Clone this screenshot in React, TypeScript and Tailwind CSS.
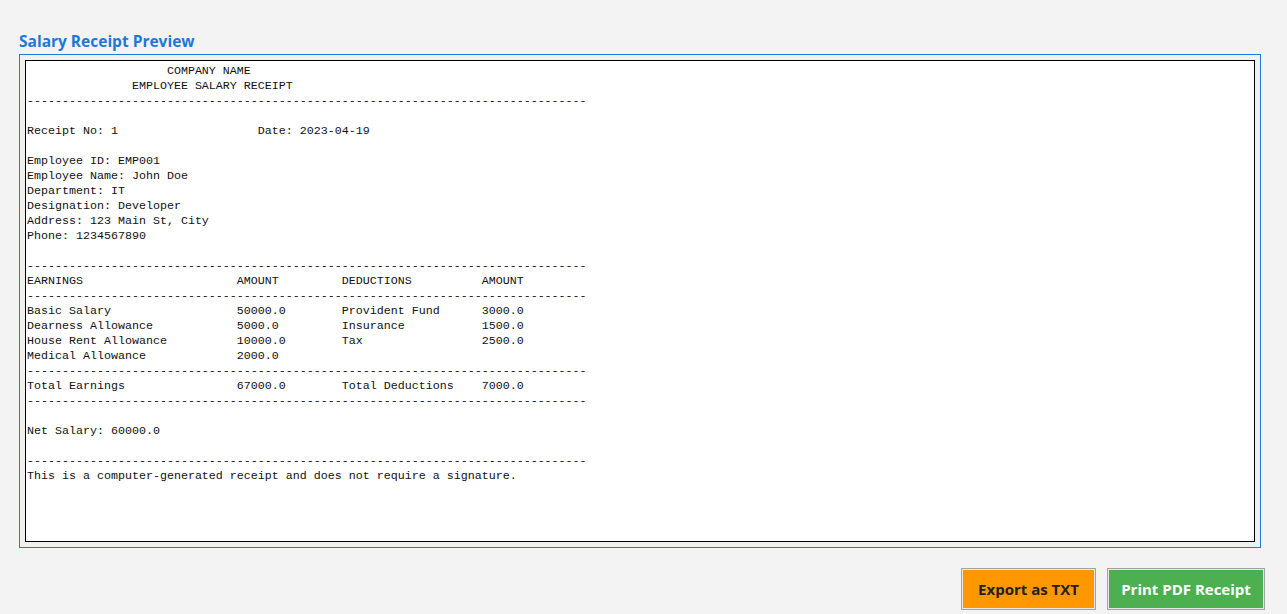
const DASH = '-'.repeat(80)

const receipt = [
  '                    COMPANY NAME',
  '               EMPLOYEE SALARY RECEIPT',
  DASH,
  '',
  'Receipt No: 1                    Date: 2023-04-19',
  '',
  'Employee ID: EMP001',
  'Employee Name: John Doe',
  'Department: IT',
  'Designation: Developer',
  'Address: 123 Main St, City',
  'Phone: 1234567890',
  '',
  DASH,
  'EARNINGS                      AMOUNT         DEDUCTIONS          AMOUNT',
  DASH,
  'Basic Salary                  50000.0        Provident Fund      3000.0',
  'Dearness Allowance            5000.0         Insurance           1500.0',
  'House Rent Allowance          10000.0        Tax                 2500.0',
  'Medical Allowance             2000.0',
  DASH,
  'Total Earnings                67000.0        Total Deductions    7000.0',
  DASH,
  '',
  'Net Salary: 60000.0',
  '',
  DASH,
  'This is a computer-generated receipt and does not require a signature.',
].join('\n')

export default function App() {
  return (
    <div className="h-[614px] w-full bg-[#f3f3f3] flex flex-col pt-[30px] font-['Open_Sans',sans-serif]">
      {/* Title */}
      <h2 className="ml-[19px] text-[15.5px] leading-[22px] font-bold text-[#1e78d6] mb-[2px]">
        Salary Receipt Preview
      </h2>

      {/* Preview panel */}
      <div className="ml-[19px] mr-[26px] h-[494px] border border-[#1e7be0] bg-[#f0f0f0] p-[5px]">
        <div className="h-full border border-black bg-white pl-px pt-[3px] overflow-hidden">
          <pre className="font-['Liberation_Mono',monospace] text-[11.67px] leading-[15px] text-[#111] whitespace-pre">
            {receipt}
          </pre>
        </div>
      </div>

      {/* Actions */}
      <div className="flex justify-end gap-[11px] mr-[22px] mt-[20px]">
        <button className="h-[42px] w-[135px] bg-[#ff9800] border border-[#a3a3a3] outline outline-1 -outline-offset-2 outline-[#e8e8e8] text-[15px] font-bold text-[#222]">
          Export as TXT
        </button>
        <button className="h-[42px] w-[158px] bg-[#4caf50] border border-[#a3a3a3] outline outline-1 -outline-offset-2 outline-[#e8e8e8] text-[15px] font-bold text-white">
          Print PDF Receipt
        </button>
      </div>
    </div>
  )
}
